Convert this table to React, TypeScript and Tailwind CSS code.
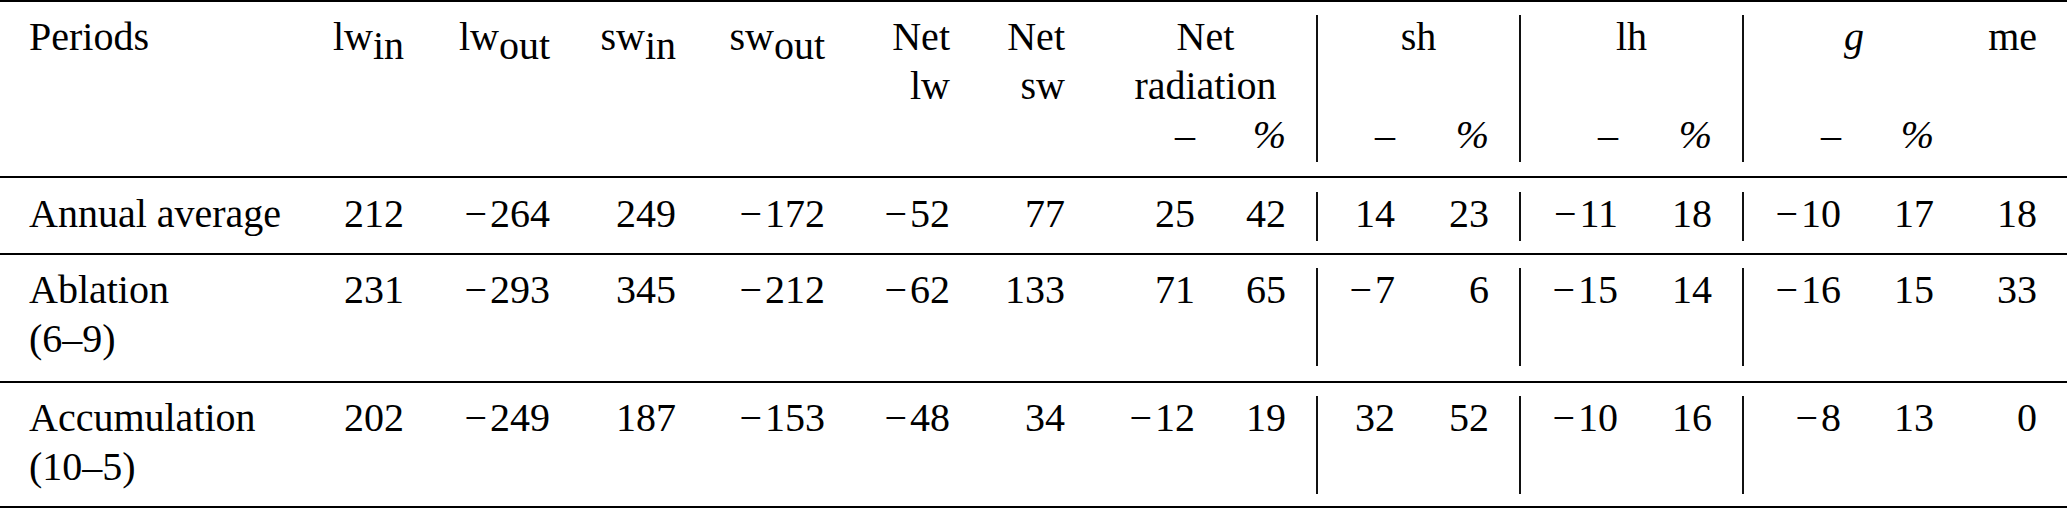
import clsx from 'clsx';
import type { ReactNode } from 'react';

// 16 columns: Periods, lw_in, lw_out, sw_in, sw_out, Net lw, Net sw, NR –, NR %, sh –, sh %, lh –, lh %, g –, g %, me
const COLS =
  'grid grid-cols-[330px_104px_146px_126px_149px_125px_115px_130px_91px_109px_94px_129px_94px_129px_93px_103px]';

type Row = { label: ReactNode; values: number[]; pad: string };

const ROWS: Row[] = [
  {
    label: 'Annual average',
    values: [212, -264, 249, -172, -52, 77, 25, 42, 14, 23, -11, 18, -10, 17, 18],
    pad: 'pt-[14px] pb-[12px]',
  },
  {
    label: (
      <>
        Ablation
        <br />
        (6–9)
      </>
    ),
    values: [231, -293, 345, -212, -62, 133, 71, 65, -7, 6, -15, 14, -16, 15, 33],
    pad: 'pt-[13px] pb-[15px]',
  },
  {
    label: (
      <>
        Accumulation
        <br />
        (10–5)
      </>
    ),
    values: [202, -249, 187, -153, -48, 34, -12, 19, 32, 52, -10, 16, -8, 13, 0],
    pad: 'pt-[13px] pb-[12px]',
  },
];

// value columns that start a new block and carry the vertical rule
const RULED = [8, 10, 12];

function Cell({ className, children }: { className?: string; children?: ReactNode }) {
  return (
    <div className={className}>
      <div className="-mt-[3px] mb-[3px]">{children}</div>
    </div>
  );
}

function Sub({ children }: { children: ReactNode }) {
  return <span className="align-[-9px] leading-[0]">{children}</span>;
}

function Num({ v }: { v: number }) {
  if (v < 0) {
    return (
      <>
        <span className="mr-[3px]">−</span>
        {Math.abs(v)}
      </>
    );
  }
  return <>{v}</>;
}

function Split({ cols, title }: { cols: string; title: ReactNode }) {
  return (
    <>
      <div className="px-[30px] text-center">{title}</div>
      <div className={cols}>
        <div className="pr-[30px] text-right">–</div>
        <div className="pr-[30px] text-right italic">%</div>
      </div>
    </>
  );
}

export default function App() {
  const num = 'pr-[30px] text-right whitespace-nowrap';
  const rule = 'border-l-2 border-[#111]';

  return (
    <div className="[font-family:Liberation_Serif,serif]">
      <div className="w-[2067px] bg-white text-black text-[40px] leading-[49px]">
        {/* header */}
        <div className={clsx(COLS, 'border-t-2 border-b-2 border-black pt-[13px] pb-[14px]')}>
          <Cell className="pl-[29px]">Periods</Cell>
          <Cell className={num}>
            lw<Sub>in</Sub>
          </Cell>
          <Cell className={num}>
            lw<Sub>out</Sub>
          </Cell>
          <Cell className={num}>
            sw<Sub>in</Sub>
          </Cell>
          <Cell className={num}>
            sw<Sub>out</Sub>
          </Cell>
          <Cell className={num}>
            Net
            <br />
            lw
          </Cell>
          <Cell className={num}>
            Net
            <br />
            sw
          </Cell>
          <Cell className="col-span-2">
            <Split
              cols="grid grid-cols-[130px_91px]"
              title={
                <>
                  Net
                  <br />
                  radiation
                </>
              }
            />
          </Cell>
          <Cell className={clsx('col-span-2', rule)}>
            <Split
              cols="grid grid-cols-[107px_94px]"
              title={
                <>
                  sh
                  <br />
                  &nbsp;
                </>
              }
            />
          </Cell>
          <Cell className={clsx('col-span-2', rule)}>
            <Split
              cols="grid grid-cols-[127px_94px]"
              title={
                <>
                  lh
                  <br />
                  &nbsp;
                </>
              }
            />
          </Cell>
          <Cell className={clsx('col-span-2', rule)}>
            <Split
              cols="grid grid-cols-[127px_93px]"
              title={
                <>
                  <span className="italic">g</span>
                  <br />
                  &nbsp;
                </>
              }
            />
          </Cell>
          <Cell className={num}>me</Cell>
        </div>

        {/* body */}
        {ROWS.map((row, r) => (
          <div key={r} className={clsx(COLS, 'border-b-2 border-black', row.pad)}>
            <Cell className="pl-[29px] whitespace-nowrap">{row.label}</Cell>
            {row.values.map((v, i) => (
              <Cell key={i} className={clsx(num, RULED.includes(i) && rule)}>
                <Num v={v} />
              </Cell>
            ))}
          </div>
        ))}
      </div>
    </div>
  );
}
